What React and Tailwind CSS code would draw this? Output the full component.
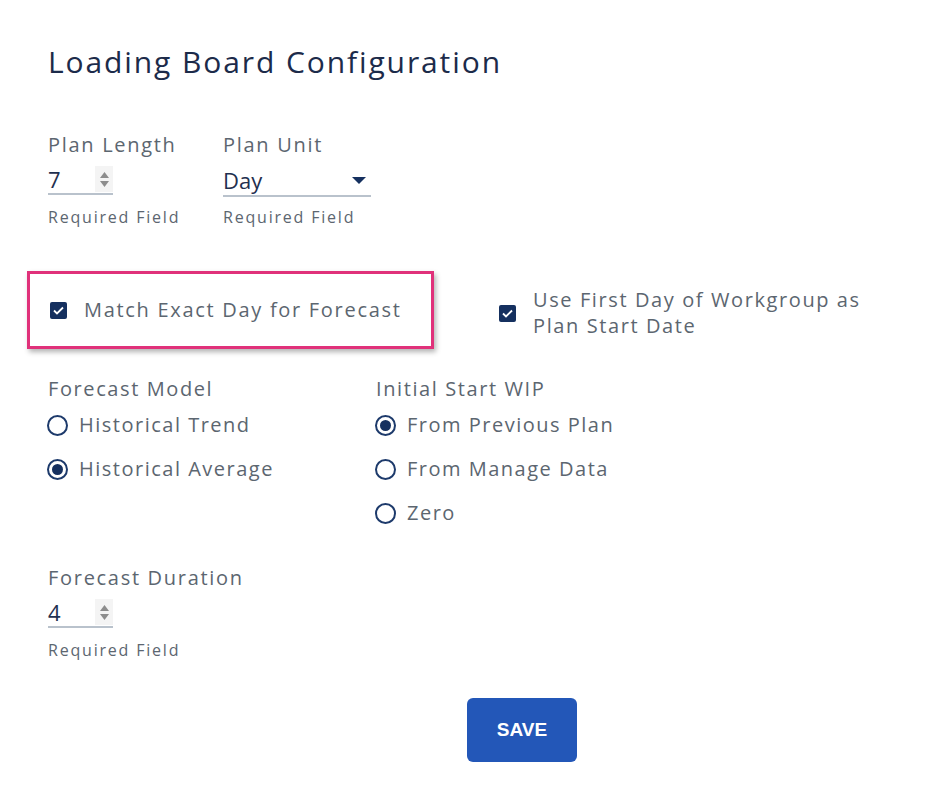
import { useState } from "react";

const FONT = { fontFamily: '"Open Sans", "Noto Sans", sans-serif' };

function Spinner() {
  return (
    <div className="flex flex-col items-center justify-center gap-[3px] w-[18px] h-[26px] bg-[#f4f4f4]">
      <svg width="9" height="6" viewBox="0 0 9 6">
        <path d="M4.5 0 L9 6 L0 6 Z" fill="#8d8d8d" />
      </svg>
      <svg width="9" height="6" viewBox="0 0 9 6">
        <path d="M0 0 L9 0 L4.5 6 Z" fill="#8d8d8d" />
      </svg>
    </div>
  );
}

function NumberField({ label, value }) {
  return (
    <div className="flex flex-col w-[175px]">
      <span className="text-[20px] leading-6 tracking-[1.7px] text-[#5c6670] whitespace-nowrap">{label}</span>
      <div className="flex items-center justify-between w-[65px] h-[38px] pt-[8px] border-b-2 border-[#b9c2cc]">
        <span className="text-[22px] text-[#1f3050]">{value}</span>
        <Spinner />
      </div>
      <span className="mt-[12px] text-[16px] leading-5 tracking-[1.8px] text-[#5c6670]">Required Field</span>
    </div>
  );
}

function Checkbox() {
  return (
    <div className="flex items-center justify-center w-[17px] h-[17px] rounded-[2px] bg-[#15305f] shrink-0">
      <svg width="11" height="9" viewBox="0 0 11 9">
        <path d="M1 4.5 L4 7.5 L10 1.5" stroke="#fff" strokeWidth="1.8" fill="none" />
      </svg>
    </div>
  );
}

function Radio({ label, checked, onClick }) {
  return (
    <button onClick={onClick} className="flex items-center h-[44px] gap-[11px] text-left">
      <span className="flex items-center justify-center w-[21px] h-[21px] rounded-full border-2 border-[#1d3a6b]">
        {checked && <span className="w-[11px] h-[11px] rounded-full bg-[#15305f]" />}
      </span>
      <span className="text-[20px] tracking-[1.5px] text-[#5c6670]">{label}</span>
    </button>
  );
}

export default function App() {
  const [model, setModel] = useState("avg");
  const [wip, setWip] = useState("prev");

  return (
    <div className="min-h-[794px] bg-white pl-12 pt-[44px]" style={FONT}>
      <h1 className="text-[30px] leading-9 tracking-[1.9px] text-[#1c2b4a]">Loading Board Configuration</h1>

      <div className="flex mt-[53px]">
        <NumberField label="Plan Length" value="7" />
        <div className="flex flex-col">
          <span className="text-[20px] leading-6 tracking-[1.7px] text-[#5c6670]">Plan Unit</span>
          <div className="flex items-center justify-between w-[148px] h-[40px] pt-[8px] pr-[5px] border-b-2 border-[#b9c2cc]">
            <span className="text-[22px] text-[#1f3050]">Day</span>
            <svg width="14" height="7" viewBox="0 0 14 7">
              <path d="M0 0 L14 0 L7 7 Z" fill="#15305f" />
            </svg>
          </div>
          <span className="mt-[10px] text-[16px] leading-5 tracking-[1.8px] text-[#5c6670]">Required Field</span>
        </div>
      </div>

      <div className="flex items-center mt-[44px] -ml-[21px]">
        <div className="flex items-center gap-[17px] w-[407px] h-[78px] pl-[20px] border-[3px] border-[#e0317a] shadow-[2px_3px_5px_rgba(0,0,0,0.3)]">
          <Checkbox />
          <span className="text-[20px] tracking-[1.7px] text-[#5c6670] whitespace-nowrap">Match Exact Day for Forecast</span>
        </div>
        <div className="flex items-center gap-[17px] ml-[65px] mt-[6px]">
          <Checkbox />
          <span className="text-[20px] leading-[26px] tracking-[1.6px] text-[#5c6670] whitespace-nowrap">
            Use First Day of Workgroup as
            <br />
            Plan Start Date
          </span>
        </div>
      </div>

      <div className="flex mt-[28px]">
        <div className="flex flex-col w-[328px]">
          <span className="text-[20px] leading-6 tracking-[1.6px] text-[#5c6670]">Forecast Model</span>
          <div className="flex flex-col mt-[2px] -ml-[1px]">
            <Radio label="Historical Trend" checked={model === "trend"} onClick={() => setModel("trend")} />
            <Radio label="Historical Average" checked={model === "avg"} onClick={() => setModel("avg")} />
          </div>
        </div>
        <div className="flex flex-col">
          <span className="text-[20px] leading-6 tracking-[1.6px] text-[#5c6670]">Initial Start WIP</span>
          <div className="flex flex-col mt-[2px] -ml-[1px]">
            <Radio label="From Previous Plan" checked={wip === "prev"} onClick={() => setWip("prev")} />
            <Radio label="From Manage Data" checked={wip === "manage"} onClick={() => setWip("manage")} />
            <Radio label="Zero" checked={wip === "zero"} onClick={() => setWip("zero")} />
          </div>
        </div>
      </div>

      <div className="mt-[31px]">
        <NumberField label="Forecast Duration" value="4" />
      </div>

      <button
        className="mt-[38px] ml-[419px] w-[110px] h-[64px] rounded-[6px] bg-[#2357b8] text-white text-[19px] font-bold"
        style={{ fontFamily: '"Liberation Sans", Arial, sans-serif' }}
      >
        SAVE
      </button>
    </div>
  );
}
